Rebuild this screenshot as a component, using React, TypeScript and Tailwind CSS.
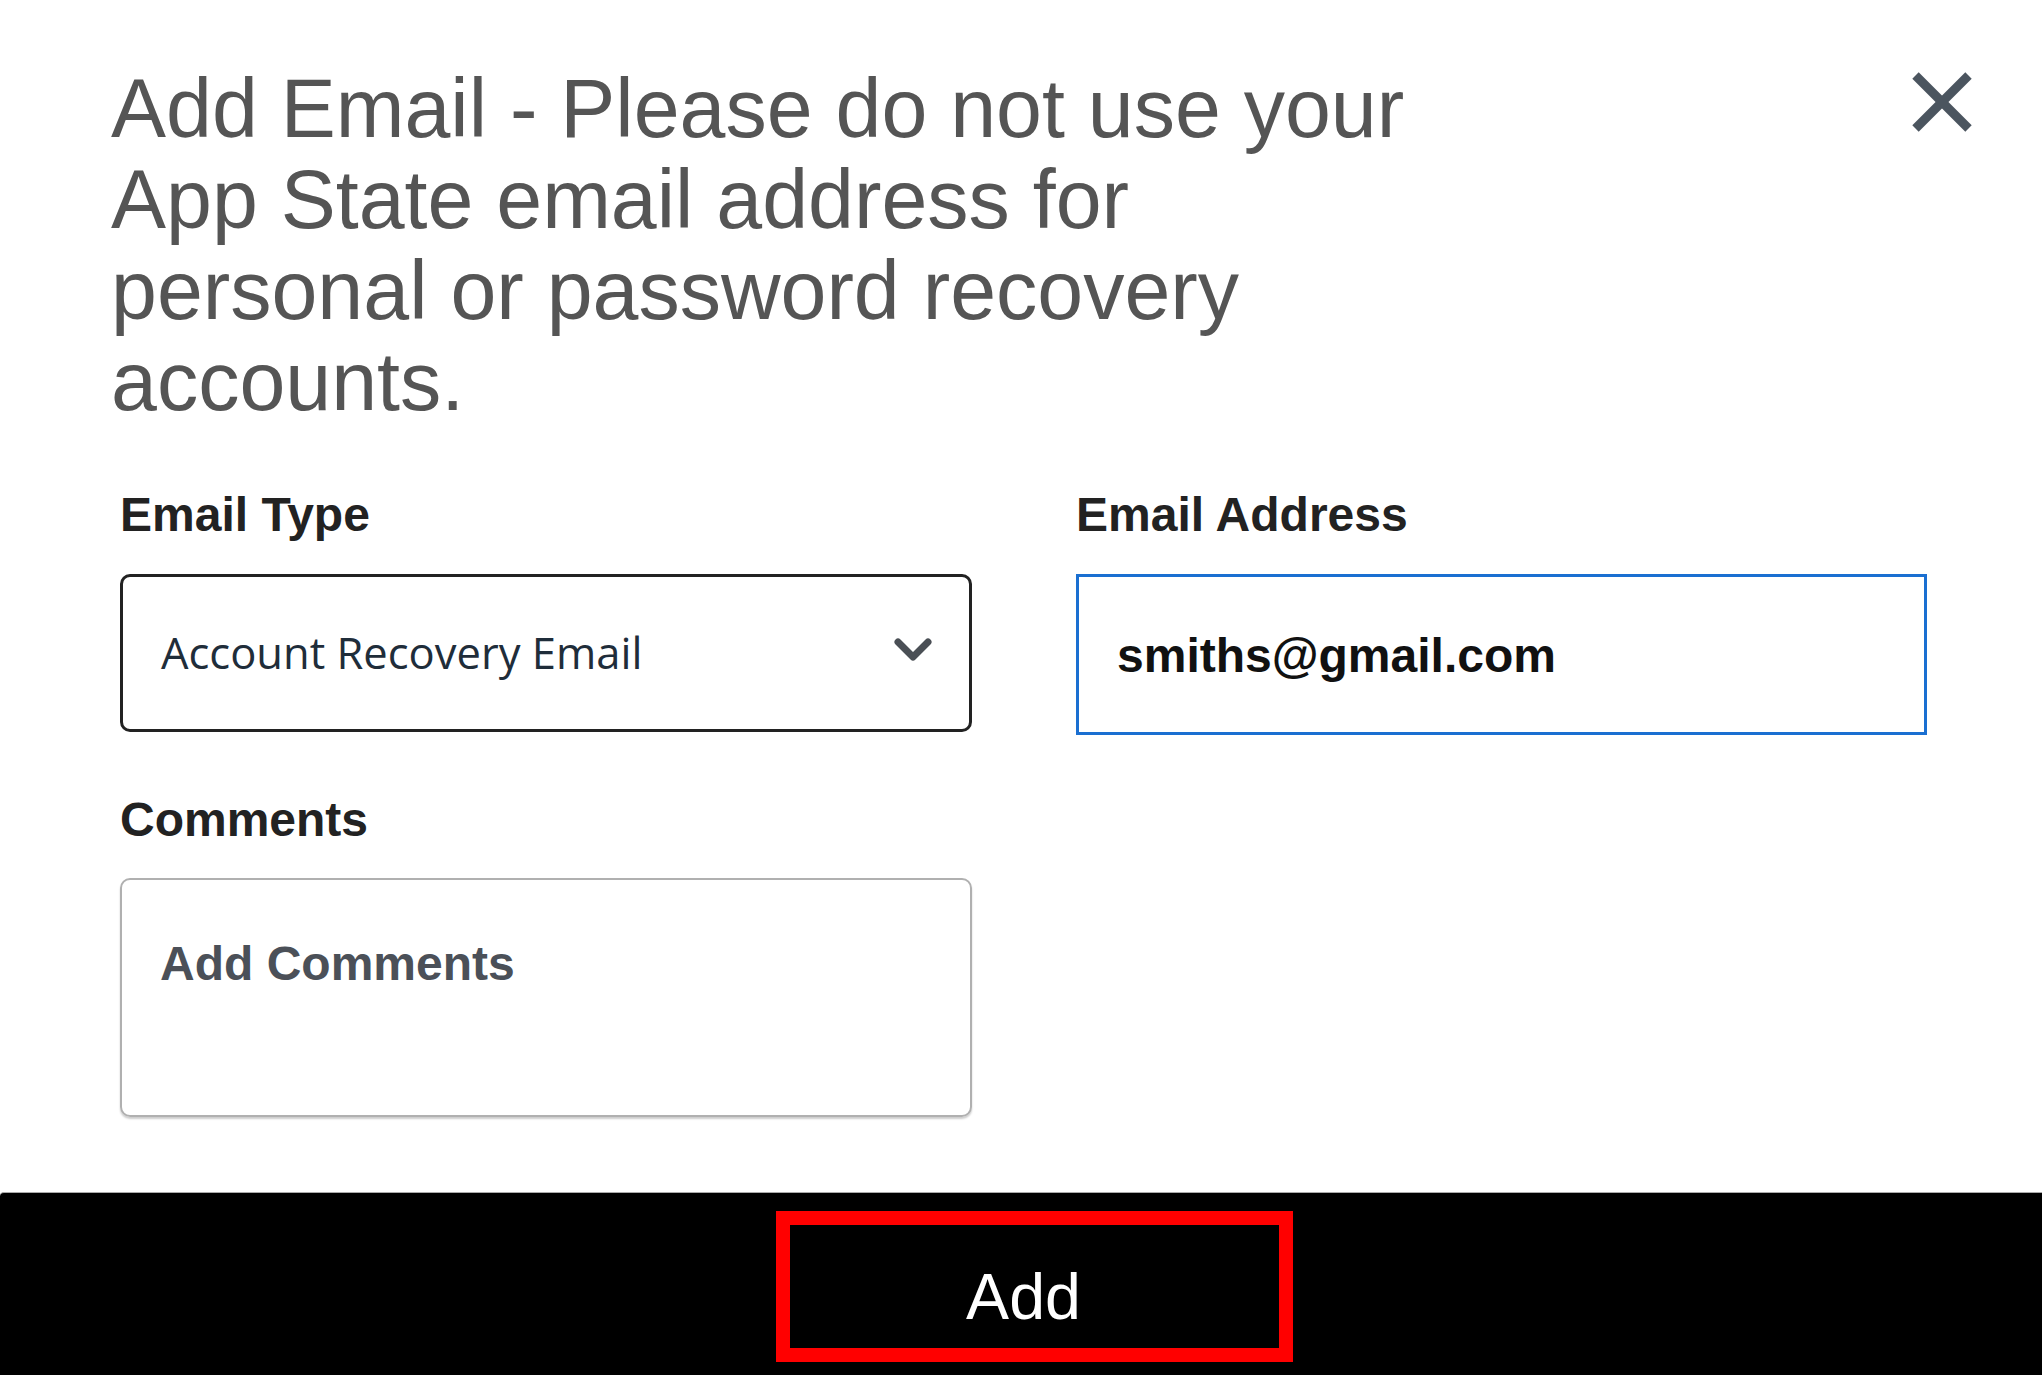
import React from "react";

export default function App() {
  return (
    <div className="w-full h-[1375px] bg-white flex flex-col overflow-hidden font-['Liberation_Sans',Arial,sans-serif]">
      {/* Header */}
      <div className="flex justify-between items-start pt-[63px] pl-[111px] pr-[70px]">
        <h2 className="w-[1330px] text-[82.5px] leading-[91px] font-normal text-[#555555]">
          Add Email - Please do not use your App State email address for personal or password recovery accounts.
        </h2>
        <button className="mt-[9px] w-[60px] h-[60px]" aria-label="Close">
          <svg width="60" height="60" viewBox="0 0 60 60" fill="none">
            <line x1="3.5" y1="3.5" x2="56.5" y2="56.5" stroke="#4b555f" strokeWidth="9" />
            <line x1="56.5" y1="3.5" x2="3.5" y2="56.5" stroke="#4b555f" strokeWidth="9" />
          </svg>
        </button>
      </div>

      {/* Form */}
      <div className="grid grid-cols-[852px_851px] gap-x-[104px] pl-[120px] mt-[61px]">
        <div className="flex flex-col">
          <label className="text-[48px] leading-[54px] font-bold text-[#222222]">Email Type</label>
          <div className="mt-[32px] h-[158px] border-[3px] border-[#222222] rounded-[10px] flex items-center justify-between pl-[38px] pr-[36px]">
            <span className="font-['Open_Sans','Noto_Sans',sans-serif] text-[43.5px] leading-none text-[#1f2d3a]">
              Account Recovery Email
            </span>
            <svg width="40" height="26" viewBox="0 0 40 26" fill="none" className="mb-[6px]">
              <polyline
                points="5,5 20,20 35,5"
                stroke="#4a4f55"
                strokeWidth="7"
                strokeLinecap="round"
                strokeLinejoin="round"
                fill="none"
              />
            </svg>
          </div>
        </div>
        <div className="flex flex-col">
          <label className="text-[48px] leading-[54px] font-bold text-[#222222]">Email Address</label>
          <div className="mt-[32px] h-[161px] border-[3px] border-[#1a6fd1] flex items-center pl-[38px] pt-[2px]">
            <span className="text-[48px] leading-none font-bold text-[#111111]">smiths@gmail.com</span>
          </div>
        </div>
        <div className="flex flex-col mt-[58px]">
          <label className="text-[48px] leading-[54px] font-bold text-[#222222]">Comments</label>
          <div className="mt-[31px] h-[239px] border-2 border-[#b0b0b0] rounded-[10px] shadow-[0_2px_2px_rgba(0,0,0,0.2)] pl-[38px] pt-[57px]">
            <div className="text-[48px] leading-[54px] font-bold text-[#4b5058]">Add Comments</div>
          </div>
        </div>
        <div />
      </div>

      <div className="flex-1" />

      {/* Footer */}
      <div className="h-[183px] shrink-0 bg-black border-t border-[#aaaaaa] rounded-tl-[4px] flex justify-center items-start pt-[18px] pl-[27px]">
        <button className="w-[517px] h-[151px] border-[14px] border-[#ff0000] bg-black text-white text-[64.5px] leading-none font-normal flex items-center justify-center pr-[22px] pt-[22px]">
          Add
        </button>
      </div>
    </div>
  );
}
